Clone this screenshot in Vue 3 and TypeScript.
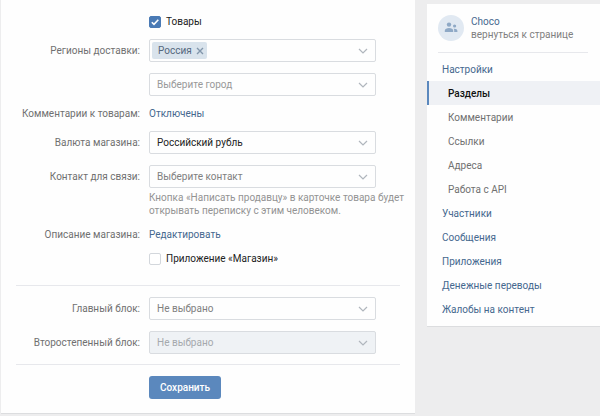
<script setup lang="ts">
import { ref } from 'vue'

interface MenuItem {
  title: string
  nested?: boolean
  active?: boolean
}

const menu: MenuItem[] = [
  { title: 'Настройки' },
  { title: 'Разделы', nested: true, active: true },
  { title: 'Комментарии', nested: true },
  { title: 'Ссылки', nested: true },
  { title: 'Адреса', nested: true },
  { title: 'Работа с API', nested: true },
  { title: 'Участники' },
  { title: 'Сообщения' },
  { title: 'Приложения' },
  { title: 'Денежные переводы' },
  { title: 'Жалобы на контент' },
]

const goods = ref(true)
const shopApp = ref(false)
const regions = ref<string[]>(['Россия'])

function removeRegion(name: string) {
  regions.value = regions.value.filter((r) => r !== name)
}
</script>

<template>
  <div class="page">
    <main class="panel">
      <form @submit.prevent>
        <section class="group">
          <label class="check">
            <input v-model="goods" type="checkbox" />
            <svg class="tick" viewBox="0 0 12 12"><path d="M2.8 6.2 5 8.4 9.3 3.8" /></svg>
            <span>Товары</span>
          </label>

          <label class="name" for="region">Регионы доставки:</label>
          <div class="field tags">
            <span v-for="r in regions" :key="r" class="tag">
              {{ r }}
              <button type="button" aria-label="Удалить" @click="removeRegion(r)">
                <svg viewBox="0 0 8 8"><path d="M1 1 7 7M7 1 1 7" /></svg>
              </button>
            </span>
            <input id="region" type="text" />
            <svg class="arrow" viewBox="0 0 10 6"><path d="M1 1 5 5 9 1" /></svg>
          </div>

          <div class="field">
            <select class="muted" aria-label="Город"><option>Выберите город</option></select>
            <svg class="arrow" viewBox="0 0 10 6"><path d="M1 1 5 5 9 1" /></svg>
          </div>

          <span class="name">Комментарии к товарам:</span>
          <a href="#" class="value">Отключены</a>

          <label class="name" for="currency">Валюта магазина:</label>
          <div class="field">
            <select id="currency"><option>Российский рубль</option></select>
            <svg class="arrow" viewBox="0 0 10 6"><path d="M1 1 5 5 9 1" /></svg>
          </div>

          <label class="name" for="contact">Контакт для связи:</label>
          <div class="field">
            <select id="contact" class="dim"><option>Выберите контакт</option></select>
            <svg class="arrow" viewBox="0 0 10 6"><path d="M1 1 5 5 9 1" /></svg>
          </div>
          <p class="hint">Кнопка «Написать продавцу» в карточке товара будет открывать переписку с этим человеком.</p>

          <span class="name">Описание магазина:</span>
          <a href="#" class="value">Редактировать</a>

          <label class="check">
            <input v-model="shopApp" type="checkbox" />
            <svg class="tick" viewBox="0 0 12 12"><path d="M2.8 6.2 5 8.4 9.3 3.8" /></svg>
            <span>Приложение «Магазин»</span>
          </label>
        </section>

        <section class="group ruled">
          <label class="name" for="main-block">Главный блок:</label>
          <div class="field">
            <select id="main-block" class="dim"><option>Не выбрано</option></select>
            <svg class="arrow" viewBox="0 0 10 6"><path d="M1 1 5 5 9 1" /></svg>
          </div>
          <label class="name" for="extra-block">Второстепенный блок:</label>
          <div class="field disabled">
            <select id="extra-block" disabled><option>Не выбрано</option></select>
            <svg class="arrow" viewBox="0 0 10 6"><path d="M1 1 5 5 9 1" /></svg>
          </div>
        </section>

        <section class="group ruled">
          <button class="save" type="submit">Сохранить</button>
        </section>
      </form>
    </main>

    <aside class="side">
      <a href="#" class="owner">
        <svg class="avatar" viewBox="0 0 26 26">
          <circle class="disc" cx="13" cy="13" r="13" />
          <circle cx="11" cy="9.6" r="2.2" />
          <path d="M6.8 17v-1.2c0-1.9 2-2.8 4.2-2.8s4.2.9 4.2 2.8V17z" />
          <circle cx="16.6" cy="11" r="1.6" />
          <path d="M16.2 17v-1.4c0-.7-.2-1.3-.6-1.8 2-.3 3.8.5 3.8 2V17z" />
        </svg>
        <span class="who"><b>Choco</b><span>вернуться к странице</span></span>
      </a>
      <nav class="menu">
        <a
          v-for="item in menu"
          :key="item.title"
          href="#"
          :class="{ nested: item.nested, active: item.active }"
        >{{ item.title }}</a>
      </nav>
    </aside>
  </div>
</template>

<style>
body {
  background: #ededee;
}
</style>

<style scoped>
.page {
  display: flex;
  align-items: flex-start;
  gap: 12px;
  padding-left: 1px;
  font: 10px/13px Roboto, 'Noto Sans', sans-serif;
  color: #222;
}
.page * {
  box-sizing: border-box;
}
a {
  color: #45688e;
  text-decoration: none;
}
.panel {
  flex: 1;
  min-width: 0;
  padding: 0 15px 14px;
  background: #fefefe;
  border-bottom: 1px solid #dcdddf;
}
.group {
  display: grid;
  grid-template-columns: 124px minmax(0, 227px);
  column-gap: 9px;
  row-gap: 11px;
  align-items: center;
  padding: 15px 0 20px;
}
.group.ruled {
  padding: 11px 0 10px;
  border-top: 1px solid #e7e8ec;
}
.group.ruled:last-child {
  padding-bottom: 0;
}
.name {
  grid-column: 1;
  color: #707070;
  text-align: right;
  white-space: nowrap;
}
.value,
.check,
.field,
.hint,
.save {
  grid-column: 2;
}
.check {
  display: grid;
  grid-template-columns: 12px auto;
  justify-content: start;
  align-items: center;
  column-gap: 5px;
}
.check input,
.tick {
  grid-area: 1 / 1;
  width: 12px;
  height: 12px;
}
.check input {
  appearance: none;
  margin: 0;
  background: #fff;
  border: 1px solid #d3d7dc;
  border-radius: 2px;
}
.check input:checked {
  background: #4a7ab5;
  border-color: #4a7ab5;
}
.tick {
  visibility: hidden;
  pointer-events: none;
  fill: none;
  stroke: #fff;
  stroke-width: 1.6;
}
.check input:checked + .tick {
  visibility: visible;
}
.field {
  display: grid;
  grid-template-columns: minmax(0, 1fr) 10px;
  align-items: center;
  height: 23px;
  padding-right: 7px;
  background: #fefefe;
  border: 1px solid #d9dce0;
  border-radius: 2px;
}
.field select {
  grid-area: 1 / 1 / 2 / 3;
  appearance: none;
  width: 100%;
  height: 21px;
  padding: 0 7px;
  border: 0;
  background: none;
  font: inherit;
  color: #222;
}
.field select.muted {
  color: #999;
}
.field select.dim {
  color: #808080;
}
.arrow {
  grid-area: 1 / 2;
  width: 10px;
  height: 6px;
  pointer-events: none;
  fill: none;
  stroke: #b0b6bd;
  stroke-width: 1.2;
}
.field.disabled {
  background: #eff2f5;
}
.field.disabled select {
  color: #a5a9ad;
  opacity: 1;
}
.field.tags {
  display: flex;
  padding-left: 2px;
}
.tags input {
  flex: 1;
  min-width: 0;
  height: 19px;
  border: 0;
  background: none;
  font: inherit;
}
.tag {
  display: flex;
  align-items: center;
  gap: 4px;
  height: 17px;
  padding: 0 3px 0 6px;
  background: #d9e3ec;
  border-radius: 2px;
  color: #55677d;
}
.tag button {
  display: flex;
  padding: 0;
  border: 0;
  background: none;
}
.tag svg {
  width: 8px;
  height: 8px;
  stroke: #8296ab;
  stroke-width: 1.4;
}
.hint {
  width: max-content;
  max-width: 256px;
  margin: -8px 0 0;
  color: #939393;
}
.save {
  justify-self: start;
  height: 23px;
  padding: 0 11px;
  border: 0;
  border-radius: 3px;
  background: #5b88bd;
  color: #fff;
  font: 500 10px/13px Roboto, 'Noto Sans', sans-serif;
}
.side {
  flex: 0 0 173px;
  margin-top: 4px;
  padding-bottom: 5px;
  background: #fefefe;
  border-bottom: 1px solid #dcdddf;
}
.owner {
  display: flex;
  align-items: center;
  gap: 7px;
  margin: 0 12px 4px 11px;
  padding: 11px 0;
  border-bottom: 1px solid #e7e8ec;
}
.avatar {
  width: 26px;
  height: 26px;
  fill: #8fa9c6;
}
.disc {
  fill: #e1e9f2;
}
.who {
  display: grid;
  white-space: nowrap;
  color: #808080;
}
.who b {
  font-weight: 400;
  color: #45688e;
}
.menu a {
  display: block;
  padding: 1px 15px 0;
  line-height: 23px;
}
.menu .nested {
  padding-left: 21px;
  color: #707070;
}
.menu .active {
  padding-left: 19px;
  border-left: 2px solid #5b88bd;
  background: #eff1f5;
  color: #111;
  font-weight: 500;
}
</style>
